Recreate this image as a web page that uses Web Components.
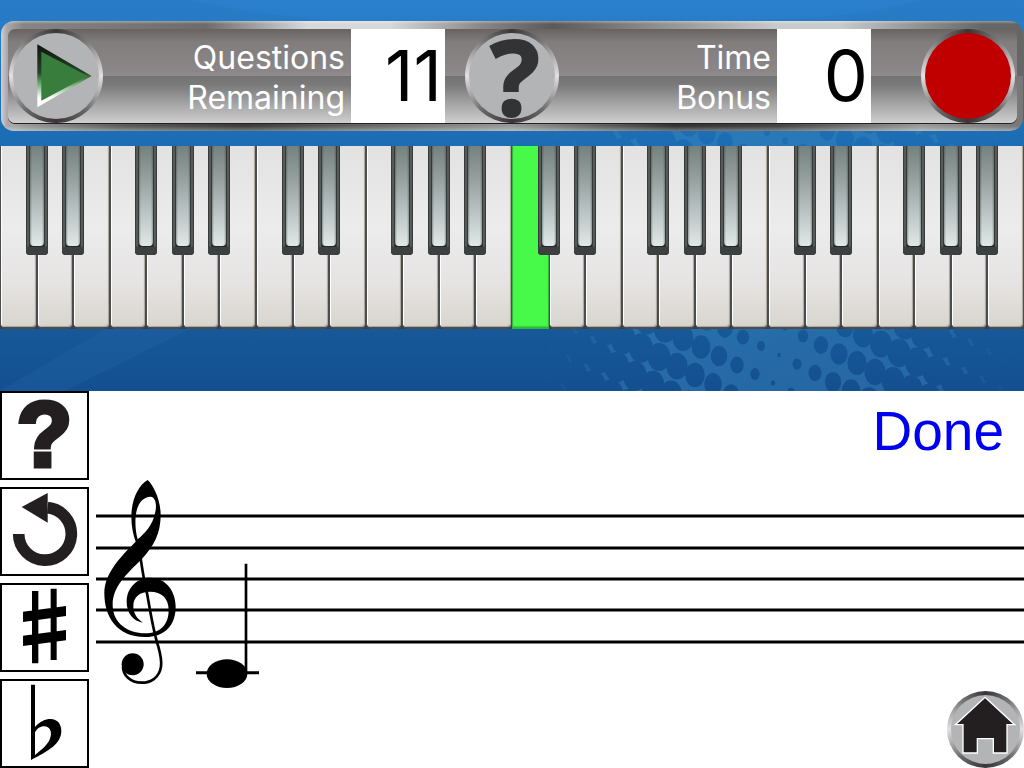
<!DOCTYPE html>
<html lang="en">
<head>
<meta charset="utf-8">
<meta name="viewport" content="width=device-width, initial-scale=1">
<title>Note Trainer</title>
<style>
  body { margin: 0; background: #fff; font-family: Inter, "Liberation Sans", sans-serif; }
</style>
</head>
<body>
<note-trainer></note-trainer>
<script>
const define = (name, html, setup) => {
  const template = document.createElement('template');
  template.innerHTML = html;
  customElements.define(name, class extends HTMLElement {
    constructor() {
      super();
      this.attachShadow({ mode: 'open' }).append(template.content.cloneNode(true));
    }
    connectedCallback() { if (setup) setup(this, this.shadowRoot); }
  });
};

/* Round metal button; the icon is slotted in */
define('round-button', `
<style>
  :host { display: block; width: var(--size, 94px); height: var(--size, 94px); }
  button { display: block; box-sizing: border-box; width: 100%; height: 100%; padding: 4px; border: 0; border-radius: 50%;
    background: conic-gradient(#3a3536, #777 40deg, #a5a3a4 60deg, #e4e0e2 90deg, #a5a3a4 115deg, #666 140deg, #3a3536 180deg, #666 220deg, #a5a3a4 245deg, #e4e0e2 270deg, #a5a3a4 300deg, #777 320deg, #3a3536);
    font: inherit; color: inherit; cursor: pointer; }
  .face { display: grid; place-items: center; width: 100%; height: 100%; border-radius: 50%; background: var(--face, #b3b4b6); overflow: hidden; }
</style>
<button type="button"><span class="face"><slot></slot></span></button>`,
(host, root) => root.querySelector('button').setAttribute('aria-label', host.getAttribute('label')));

/* Caption and its value in a white box */
define('score-field', `
<style>
  :host { display: grid; grid-template-columns: 1fr 94px; gap: 6px; }
  label { align-self: center; color: #fff; font-size: 32px; line-height: 40px; text-align: right; white-space: pre-line; padding-top: 4px; }
  output { box-sizing: border-box; height: 94px; padding-right: 3px; background: #fff; color: #000; font-size: 70px; line-height: 94px; text-align: right; }
</style>
<label for="value"></label><output id="value"></output>`,
(host, root) => {
  root.querySelector('label').textContent = host.getAttribute('caption').replace(' ', '\n');
  root.querySelector('output').textContent = host.getAttribute('value');
});

define('status-bar', `
<style>
  :host { display: block; margin: 0 1px; padding: 8px 6px 8px 7px; border-radius: 13px;
    background:
      linear-gradient(#fff5, #fff0 3px 105px, #fff5),
      linear-gradient(90deg, #d0ced0, #aaa8aa 6px, #aaa0 22px),
      linear-gradient(90deg, #8a8889, #6e6b6c 20%, #d8d8da 30% 38%, #8a8788 47%, #5d5859 54%, #8a8888 63%, #c9cacc 76% 82%, #666 96%) top / 100% 50% no-repeat,
      linear-gradient(90deg, #aaa, #5c5a5b 12%, #3d3b3c 24%, #777 40%, #999 50%, #333 66%, #444 76%, #999 90%, #777) bottom / 100% 50% no-repeat; }
  .panel { display: grid; grid-template-columns: 94px 342fr 20px 94px 312fr 50px 94px; height: 94px; padding: 0 2px 0 1px; border-radius: 7px;
    background: linear-gradient(#686361, #817d7d 14%, #8b8788 45%, #918d8d 49.5%, #737273 50%, #7c7b7c 60%, #cfcfd0);
    box-shadow: 0 1px #222; }
  .help { grid-column: 4; }
  .record { grid-column: 7; --face: #c00000; }
  svg { display: block; width: 86px; height: 86px; }
  .mark { display: block; color: #333335; font: 700 104px/86px "Open Sans", sans-serif; padding: 0 0 12px 6px; -webkit-text-stroke: 2px #333335; }
</style>
<div class="panel">
  <round-button label="Play">
    <svg viewBox="12 12 258 258" aria-hidden="true">
      <defs><linearGradient id="bevel" x2="0" y2="1"><stop stop-color="#111"/><stop offset=".45" stop-color="#24452a"/><stop offset=".6" stop-color="#61a065"/><stop offset=".85" stop-color="#fff"/></linearGradient></defs>
      <path d="M85 46 248 141 85 235Z" fill="url(#bevel)"/><path d="M97 68 236 141 97 215Z" fill="#387d3b"/>
    </svg>
  </round-button>
  <score-field caption="Questions Remaining" value="11"></score-field>
  <round-button class="help" label="Help"><span class="mark">?</span></round-button>
  <score-field caption="Time Bonus" value="0"></score-field>
  <round-button class="record" label="Stop"></round-button>
</div>`);

/* Four octaves of piano keys, starting at C */
define('piano-keys', `
<style>
  :host { display: grid; grid-template-columns: repeat(28, 1fr); height: 183px; background: #3c4042; }
  .cell { position: relative; }
  button { display: block; box-sizing: border-box; padding: 0; border: 0; cursor: pointer; }
  .white { width: 100%; height: 100%; border: solid #4a4c4d; border-width: 0 1px 2px; border-radius: 0 0 5px 5px;
    background: linear-gradient(#e3e2e2, #ececed 45%, #e6e4e3 75%, #d9d5ce);
    box-shadow: inset 1px 0 #fff, inset -1px -1px 1px #aaa49b; }
  .white.lit { border-color: #32b53a; background: #47f949; box-shadow: inset 0 -1px 1px #31d637; border-radius: 0; }
  .black { position: absolute; z-index: 1; top: 0; left: 100%; width: 22px; height: 109px; margin-left: -11px; padding: 0 4px 9px;
    border-radius: 0 0 4px 4px; background: linear-gradient(90deg, #333836, #656b69 2px, #252a28 4px, #252a28 18px, #656b69 20px, #333836); box-shadow: inset 0 -8px #3c403f, inset 0 -2px 2px #222; }
  .black::before { content: ""; display: block; height: 100%; border-radius: 0 0 4px 4px;
    background: linear-gradient(90deg, #2d333266, #0000 2px 12px, #2d333266), linear-gradient(#75817f, #97a2a1 35%, #b9c3c3 65%, #e0e7e7); }
</style>`,
(host, root) => {
  const names = ['C', 'D', 'E', 'F', 'G', 'A', 'B'];
  const lit = Number(host.getAttribute('lit'));
  for (let i = 0; i < 28; i++) {
    const name = names[i % 7], octave = 2 + Math.floor(i / 7);
    const cell = document.createElement('div');
    cell.className = 'cell';
    cell.innerHTML = `<button type="button" class="white${i === lit ? ' lit' : ''}" aria-label="${name}${octave}"></button>`
      + ('CDFGA'.includes(name) ? `<button type="button" class="black" aria-label="${name} sharp ${octave}"></button>` : '');
    root.append(cell);
  }
});

/* Blue gradient with a light sweep and a halftone glow */
define('blue-stage', `
<style>
  :host { display: block; position: relative; overflow: hidden; padding: 21px 0 62px;
    background: linear-gradient(#2a80cc, #1b6cb2 38%, #165898 85%, #144f90); }
  .art { position: absolute; inset: 0; width: 100%; height: 100%; }
  .content { position: relative; display: grid; gap: 15px; }
</style>
<svg class="art" viewBox="0 0 1024 391" preserveAspectRatio="none" aria-hidden="true">
  <defs>
    <linearGradient id="glow"><stop stop-color="#3a86bd" stop-opacity="0"/><stop offset=".2" stop-color="#3a86bd" stop-opacity=".5"/><stop offset=".5" stop-color="#3a86bd" stop-opacity=".45"/><stop offset=".8" stop-color="#3a86bd" stop-opacity=".45"/><stop offset="1" stop-color="#3a86bd" stop-opacity="0"/></linearGradient>
    <mask id="dots" maskUnits="userSpaceOnUse" x="540" y="120" width="484" height="271"><rect x="540" y="120" width="484" height="271" fill="#fff"/><g fill="#000"></g></mask>
  </defs>
  <path d="M0 391H65L190 329H105L10 385Z" fill="#2467a8" opacity=".3"/>
  <path d="M0 0H190Q240 12 330 21H700Q850 22 920 0H1024V21H0Z" fill="#2373bd" opacity=".25"/>
  <rect x="540" y="125" width="480" height="266" fill="url(#glow)" mask="url(#dots)"/>
</svg>
<div class="content"><slot></slot></div>`,
(host, root) => {
  let out = '';
  for (let a = -30; a < 30; a++) for (let b = -14; b < 14; b++) {
    const x = 719 + 18 * a - 6 * b, y = 356 + 9 * a + 28 * b;
    if (x < 520 || x > 1040 || y < 100 || y > 410) continue;
    const r = 1.5 + 12 * (1 - Math.exp(-Math.abs(x - 777) / 70));
    out += `<ellipse cx="${x}" cy="${y}" rx="${r.toFixed(1)}" ry="${(r * 1.25).toFixed(1)}"/>`;
  }
  root.querySelector('mask g').innerHTML = out;
});

define('tool-tile', `
<style>
  :host { display: block; }
  button { display: grid; place-items: center; box-sizing: border-box; width: 89px; height: 89px; padding: 0; border: 2px solid #000; background: #fff; color: #231f20; font: inherit; cursor: pointer; overflow: hidden; }
</style>
<button type="button"><slot></slot></button>`,
(host, root) => root.querySelector('button').setAttribute('aria-label', host.getAttribute('label')));

define('music-staff', `
<style>
  :host { display: block; }
  .staff { display: block; width: 100%; height: 220px; }
</style>
<svg class="staff" role="img" aria-label="Treble staff with one note, middle C">
  <g stroke="#000" stroke-width="3">
    <line x2="100%" y1="45" y2="45"/><line x2="100%" y1="77" y2="77"/><line x2="100%" y1="108" y2="108"/><line x2="100%" y1="139" y2="139"/><line x2="100%" y1="171" y2="171"/>
  </g>
  <svg x="-6" y="-1" width="180" height="230" viewBox="0 0 540 690">
    <path fill-rule="evenodd" d="M173 30C190 45 212 90 212 135C212 190 192 228 155 268C110 312 68 350 68 405C68 460 115 490 165 490C210 490 236 465 236 420C236 385 215 365 180 365C150 365 130 380 130 408C130 430 140 445 159 458C130 453 110 430 110 395C110 355 140 323 180 323C225 323 257 360 257 410C257 465 225 501 165 501C80 501 43 440 43 370C43 310 90 262 137 215C130 195 124 170 124 140C124 90 145 45 173 30ZM143 208C131 165 130 82 182 80C200 82 200 112 195 130C188 165 165 190 143 208Z"/>
    <path d="M152 266C160 320 165 345 171 370C183 435 190 485 205 530C212 555 215 575 213 590C208 625 180 638 155 638C120 638 99 615 99 590" fill="none" stroke="#000" stroke-width="8"/>
    <circle cx="128" cy="583" r="33"/>
    <path d="M464 281h8v330h-8zM318 604h189v9H318z"/><ellipse cx="411" cy="611" rx="61" ry="43"/>
  </svg>
</svg>`);

define('answer-sheet', `
<style>
  :host { display: grid; grid-template-columns: 89px 1fr; gap: 7px; background: #fff; }
  nav { display: grid; gap: 7px; align-content: start; }
  .page { display: grid; grid-template-rows: 80px 220px 77px; min-width: 0; }
  .done { justify-self: end; padding: 0 20px 0 0; border: 0; background: none; color: #0000f0; font: 55px/80px "Liberation Sans", Arial, sans-serif; cursor: pointer; }
  .home { justify-self: end; --size: 77px; }
  .home svg { display: block; width: 69px; height: 69px; }
  tool-tile svg { display: block; width: 85px; height: 85px; }
  .mark { display: block; font: 700 90px/85px "Liberation Sans", Arial, sans-serif; -webkit-text-stroke: 5px #231f20; }
</style>
<nav>
  <tool-tile label="Hint"><span class="mark">?</span></tool-tile>
  <tool-tile label="Undo"><svg viewBox="6 6 255 255" aria-hidden="true"><path d="M56 141A79 79 0 1 0 143 62" fill="none" stroke="#231f20" stroke-width="35"/><path d="M65 60 143 18V107Z" fill="#231f20"/></svg></tool-tile>
  <tool-tile label="Sharp"><svg viewBox="6 6 255 255" aria-hidden="true"><path d="M96 24h19v217H96zM152 17h18v214h-18zM69 86 198 69v30L69 117zM69 158 198 141v31L69 189z"/></svg></tool-tile>
  <tool-tile label="Flat"><svg viewBox="6 6 255 255" aria-hidden="true"><path fill-rule="evenodd" d="M93 17H105V144C120 128 135 120 152 120C172 120 184 135 184 155C184 195 145 215 93 243ZM105 160C113 146 123 142 133 142C150 143 155 158 152 172C148 195 125 212 105 228Z"/></svg></tool-tile>
</nav>
<div class="page">
  <button type="button" class="done">Done</button>
  <music-staff></music-staff>
  <round-button class="home" label="Home"><svg viewBox="12 12 207 207" aria-hidden="true"><path d="M114 19 203 101H180V186H139V143H91V186H48V101H25Z" fill="#231f20" stroke="#fff" stroke-width="4"/></svg></round-button>
</div>`);

define('note-trainer', `
<style>:host { display: block; }</style>
<blue-stage><status-bar></status-bar><piano-keys lit="14"></piano-keys></blue-stage>
<answer-sheet></answer-sheet>`);
</script>
</body>
</html>
